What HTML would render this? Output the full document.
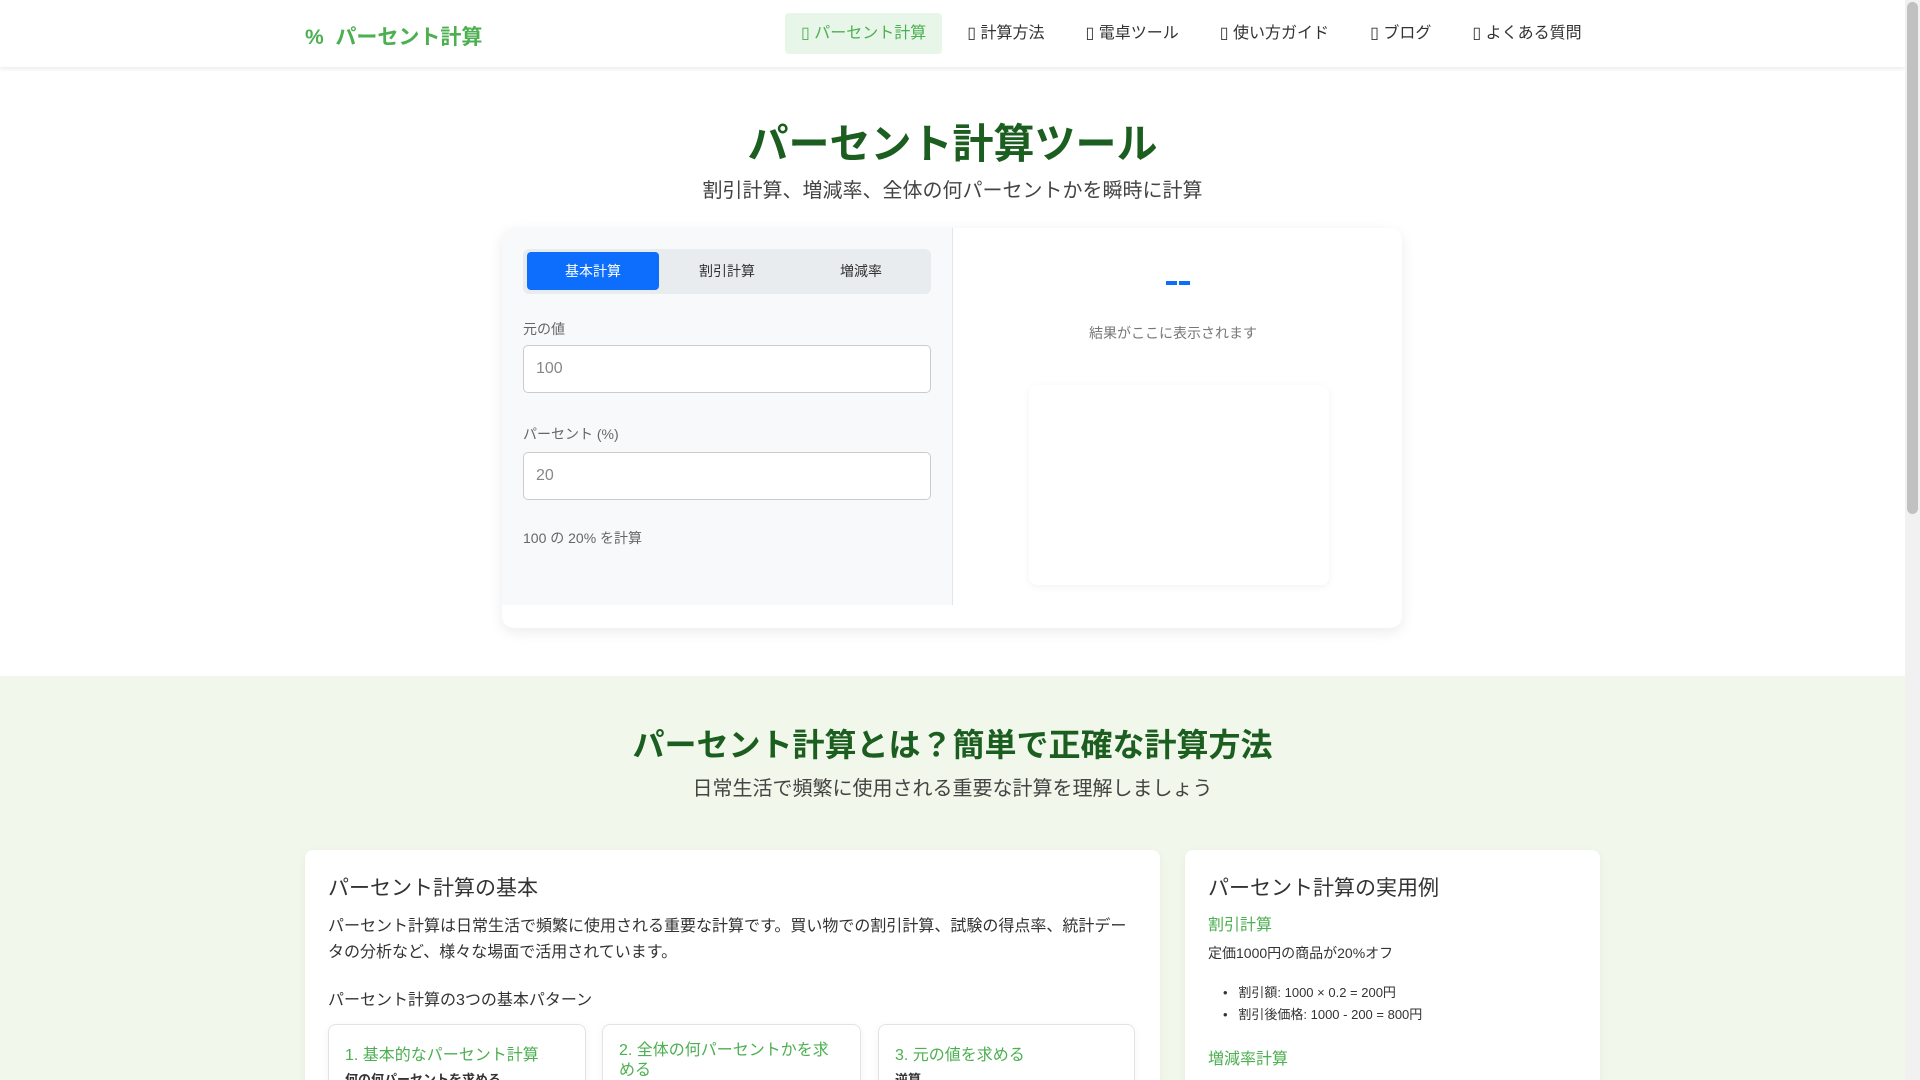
<!DOCTYPE html>
<html><head><meta charset="utf-8"><style>
*{box-sizing:border-box;margin:0;padding:0}
html,body{width:1920px;height:1080px;overflow:hidden}
body{font-family:"Liberation Sans","Noto Sans CJK JP",sans-serif;background:#fff;color:#333;position:relative}
.nav{height:67px;width:1905px;background:#fff;box-shadow:0 2px 4px rgba(0,0,0,.08);position:relative}
.logo{position:absolute;left:305px;top:21px;font-size:21px;font-weight:bold;color:#4caf50}
.menu{position:absolute;left:785px;top:13px;display:flex;font-size:16px;color:#333}
.menu div{height:41px;line-height:42px;padding:0 16px;margin-right:9px;border-radius:4px}
.menu .act{background:#e8f5e9;color:#4caf50}
h1{position:absolute;top:110px;width:1905px;text-align:center;font-size:41px;color:#1b5e20;font-weight:bold}
.sub{position:absolute;top:174px;width:1905px;text-align:center;font-size:20px;color:#444}
.card{position:absolute;left:502px;top:228px;width:900px;height:400px;background:#fff;border-radius:12px;box-shadow:0 4px 14px rgba(0,0,0,.08);overflow:hidden}
.left{position:absolute;left:0;top:0;width:451px;height:377px;background:#f8f9fa;border-right:1px solid #e5e5e5}
.tabs{position:absolute;left:21px;top:21px;width:408px;height:45px;background:#e9ecef;border-radius:6px}
.tab{position:absolute;top:3px;height:38px;width:132px;line-height:38px;text-align:center;font-size:14px;color:#333;border-radius:4px}
.lbl{position:absolute;left:21px;font-size:14px;color:#666}
.inp{position:absolute;left:21px;width:408px;height:48px;border:1px solid #ccc;border-radius:5px;background:#fff;font-size:16px;color:#888;padding:14px 12px}
.sec{position:absolute;top:676px;left:0;width:1905px;height:404px;background:#f1f7ea;overflow:hidden}
.c{position:absolute;background:#fff;border-radius:8px;box-shadow:0 2px 8px rgba(0,0,0,.05)}
.t{position:absolute;white-space:nowrap}
.sb{position:absolute;left:1905px;top:0;width:15px;height:1080px;background:#f1f1f1}
.sb div{position:absolute;left:2px;top:2px;width:11px;height:512px;background:#c1c1c1;border-radius:6px}
</style></head><body>
<div class="nav"><div class="logo">%&nbsp; パーセント計算</div>
<div class="menu"><div class="act">&#x25AF; パーセント計算</div><div>&#x25AF; 計算方法</div><div>&#x25AF; 電卓ツール</div><div>&#x25AF; 使い方ガイド</div><div>&#x25AF; ブログ</div><div>&#x25AF; よくある質問</div></div></div>
<h1>パーセント計算ツール</h1>
<div class="sub">割引計算、増減率、全体の何パーセントかを瞬時に計算</div>
<div class="card">
<div class="left">
<div class="tabs"><div class="tab" style="left:4px;background:#0d6efd;color:#fff">基本計算</div><div class="tab" style="left:138px">割引計算</div><div class="tab" style="left:272px">増減率</div></div>
<div class="lbl" style="top:91px">元の値</div>
<div class="inp" style="top:117px">100</div>
<div class="lbl" style="top:196px">パーセント (%)</div>
<div class="inp" style="top:224px">20</div>
<div class="lbl" style="top:300px">100 の 20% を計算</div>
</div>
<div class="t" style="left:664px;top:53px;width:24px;height:4px;background:#0d6efd"></div>
<div class="t" style="left:675px;top:53px;width:2px;height:4px;background:#fff"></div>
<div class="t" style="left:587px;top:95px;font-size:14px;color:#777">結果がここに表示されます</div>
<div class="c" style="left:527px;top:157px;width:300px;height:200px"></div>
</div>
<div class="sec">
<div class="t" style="top:44px;width:1905px;text-align:center;font-size:32px;font-weight:bold;color:#1b5e20">パーセント計算とは？簡単で正確な計算方法</div>
<div class="t" style="top:96px;width:1905px;text-align:center;font-size:20px;color:#444">日常生活で頻繁に使用される重要な計算を理解しましょう</div>
<div class="c" style="left:305px;top:174px;width:855px;height:400px">
<div class="t" style="left:23px;top:22px;font-size:21px;color:#333">パーセント計算の基本</div>
<div class="t" style="left:23px;top:64px;font-size:16px;line-height:26px;white-space:normal;width:810px">パーセント計算は日常生活で頻繁に使用される重要な計算です。買い物での割引計算、試験の得点率、統計データの分析など、様々な場面で活用されています。</div>
<div class="t" style="left:23px;top:136px;font-size:16px">パーセント計算の3つの基本パターン</div>
<div class="c" style="left:23px;top:174px;width:258px;height:200px;border:1px solid #e3e3e3"><div class="t" style="left:16px;top:16px;font-size:16px;color:#4caf50">1. 基本的なパーセント計算</div><div class="t" style="left:16px;top:44px;font-size:13px;font-weight:bold">何の何パーセントを求める</div></div>
<div class="c" style="left:297px;top:174px;width:259px;height:200px;border:1px solid #e3e3e3"><div class="t" style="left:16px;top:16px;font-size:16px;color:#4caf50;white-space:normal;width:225px;line-height:20px">2. 全体の何パーセントかを求める</div></div>
<div class="c" style="left:573px;top:174px;width:257px;height:200px;border:1px solid #e3e3e3"><div class="t" style="left:16px;top:16px;font-size:16px;color:#4caf50">3. 元の値を求める</div><div class="t" style="left:16px;top:44px;font-size:13px;font-weight:bold">逆算</div></div>
</div>
<div class="c" style="left:1185px;top:174px;width:415px;height:400px">
<div class="t" style="left:23px;top:22px;font-size:21px;color:#333">パーセント計算の実用例</div>
<div class="t" style="left:23px;top:61px;font-size:16px;color:#4caf50">割引計算</div>
<div class="t" style="left:23px;top:93px;font-size:14px">定価1000円の商品が20%オフ</div>
<div class="t" style="left:38px;top:132px;font-size:13px;line-height:22px">•&nbsp;&nbsp; 割引額: 1000 × 0.2 = 200円<br>•&nbsp;&nbsp; 割引後価格: 1000 - 200 = 800円</div>
<div class="t" style="left:23px;top:195px;font-size:16px;color:#4caf50">増減率計算</div>
</div>
</div>
<div class="sb"><div></div></div>
</body></html>
